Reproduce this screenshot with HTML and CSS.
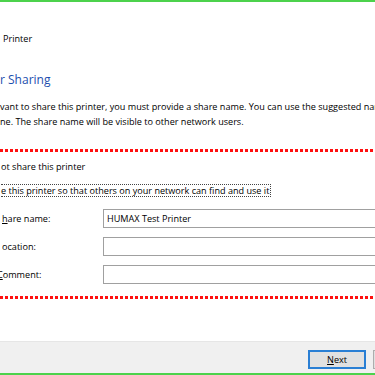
FILE: index.html
```html
<!DOCTYPE html>
<html lang="en">

<head>
    <meta charset="UTF-8">
    <meta name="viewport" content="width=device-width, initial-scale=1.0">
    <title>Add Printer - Printer Sharing</title>
    <link rel="stylesheet" href="styles.css">
</head>

<body>
    <div class="wizard">
        <div class="accent"></div>

        <div class="caption">Printer</div>
        <h1 class="instruction">r Sharing</h1>

        <p class="intro">
            <span class="line">vant to share this printer, you must provide a share name. You can use the suggested name or type a new</span>
            <span class="line">ne. The share name will be visible to other network users.</span>
        </p>

        <div class="marker"></div>

        <div class="choices">
            <div class="choice">ot share this printer</div>
            <div class="choice"><span class="focus">e this printer so that others on your network can find and use it</span></div>
        </div>

        <div class="fields">
            <label class="field-label" for="share"><u>h</u>are name:</label>
            <input class="edit" id="share" type="text" value="HUMAX Test Printer">

            <label class="field-label" for="location">ocation:</label>
            <input class="edit" id="location" type="text">

            <label class="field-label clipped" for="comment"><u>C</u>omment:</label>
            <input class="edit" id="comment" type="text">
        </div>

        <div class="marker"></div>

        <div class="fill"></div>

        <div class="commands">
            <button class="btn btn-default"><u>N</u>ext</button>
            <button class="btn">Cancel</button>
        </div>

        <div class="accent"></div>
    </div>
</body>

</html>
```

FILE: styles.css
```css
body {
    margin: 0;
    background: #ffffff;
    font-family: "Open Sans", "Noto Sans", sans-serif;
    font-size: 9.1px;
    color: #000000;
}

.wizard {
    width: 375px;
    height: 375px;
    display: flex;
    flex-direction: column;
    overflow: hidden;
    white-space: nowrap;
}

/* green frame lines of the capture */
.accent {
    height: 2px;
    flex: none;
    background: #4cd24c;
}

.caption {
    padding: 30px 0 0 3px;
    line-height: 13px;
}

.instruction {
    margin: 26px 0 0 0;
    font-size: 12px;
    font-weight: normal;
    line-height: 17px;
    color: #1c4fae;
}

.intro {
    margin: 12px 0 0 0;
    line-height: 14.5px;
}

.intro .line {
    display: block;
}

/* red dotted annotation */
.marker {
    height: 3px;
    width: 373px;
    flex: none;
    margin-top: 20px;
    background: repeating-linear-gradient(90deg, #ff1010 0 3px, transparent 3px 5px);
}

.choices {
    margin-top: 8px;
    display: flex;
    flex-direction: column;
    gap: 11px;
    line-height: 13px;
}

.choice {
    padding-left: 1px;
}

.focus {
    display: inline-block;
    line-height: 11px;
    padding: 0 1px 0 0;
    border: 1px dotted #444444;
    border-left: none;
}

.fields {
    margin-top: 12px;
    display: grid;
    grid-template-columns: 103px 1fr;
    grid-auto-rows: 19px;
    row-gap: 9px;
    align-items: center;
}

.field-label {
    padding-left: 2px;
}

.field-label.clipped {
    margin-left: -3px;
    padding-left: 0;
}

.edit {
    box-sizing: border-box;
    height: 19px;
    width: 290px;
    margin: 0;
    padding: 0 3px;
    border: 1px solid #a0a0a0;
    font-family: inherit;
    font-size: 9.1px;
    color: #000000;
    outline: none;
}

.fields .marker {
    margin-top: 0;
}

.fields + .marker {
    margin-top: 12px;
}

.fill {
    flex: 1;
}

.commands {
    flex: none;
    height: 32px;
    box-sizing: border-box;
    padding: 8px 0 0 308px;
    display: flex;
    gap: 7px;
    align-items: flex-start;
    background: #f0f0f0;
    border-top: 1px solid #e6e6e6;
}

.btn {
    flex: none;
    width: 58px;
    height: 19px;
    padding: 0;
    background: #e1e1e1;
    border: 1px solid #adadad;
    font-family: inherit;
    font-size: 9.1px;
    color: #000000;
}

.btn-default {
    border: 2px solid #2a7fd4;
}
```
